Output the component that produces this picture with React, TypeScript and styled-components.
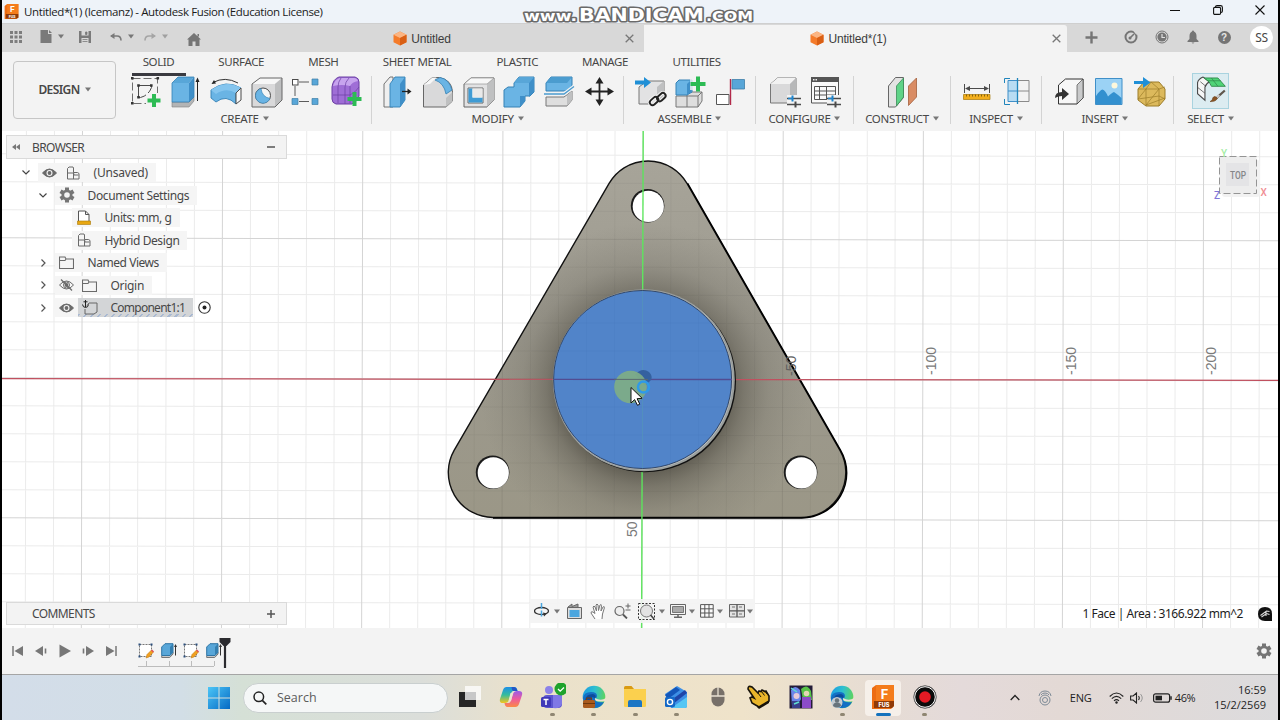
import React from 'react';
import styled, { createGlobalStyle } from 'styled-components';

const INK = '#4b4b4b';
const BLUE = '#6ab4e4';
const BLUE_DARK = '#3f8fc8';
const GREY = '#d9d9da';
const GREEN = '#2dbb54';

type SlotProps = { $w: number, $ml?: number };
type TextProps = { $size?: number, $ls?: number };

const GlobalStyle = createGlobalStyle`
  * { box-sizing: border-box; }
  body { margin: 0; background: #000; overflow: hidden; }
  svg { display: block; flex: none; }
`;

const Caret = ({ color = '#777' }: { color?: string }) => (
  <svg width="6" height="5" viewBox="0 0 6 5"><path d="M0 .5h6L3 4.5z" fill={color} /></svg>
);

const Plus = ({ x, y, s = 6.5 }: { x: number, y: number, s?: number }) => (
  <path d={`M${x - s} ${y}H${x + s}M${x} ${y - s}V${y + s}`} stroke={GREEN} strokeWidth="4" fill="none" />
);

const Sliders = () => (
  <g>
    <rect x="22" y="19" width="16" height="13" fill="#f3f3f3" />
    <path d="M22 22.5h14M22 28.5h14" stroke="#4b4b4b" strokeWidth="1.4" />
    <path d="M23 22.5h4" stroke="#1f85cc" strokeWidth="1.6" />
    <path d="M27.5 19.5v6" stroke="#1f85cc" strokeWidth="2" />
    <path d="M30.5 25.5v6" stroke="#4b4b4b" strokeWidth="2" />
  </g>
);

const ribbonIcons: { [key: string]: React.ReactNode } = {
  sketch: <>
    <path d="M7.5 2.5h25v25h-25z" fill="none" stroke={INK} strokeDasharray="8 3" strokeWidth=".8" />
    <path d="M13.5 9.5h13v2q-3 8-11 10h-2z" fill="none" stroke={INK} strokeWidth="1" />
    <path d="M6 1h2.6v2.6H6zM31.5 1h2.6v2.6h-2.6zM6 26h2.6v2.6H6zM12.2 8.2h2.6v2.6h-2.6zM25 8.2h2.6v2.6H25zM12.2 20h2.6v2.6h-2.6z" fill="#333" />
    <path d="M21 17h16v15H21z" fill="#f3f3f3" />
    <Plus x={29} y={24.5} />
  </>,
  extrude: <>
    <path d="M7 26h17l5-5v4l-5 6H7z" fill="#b3b4b5" stroke="#808080" strokeWidth=".6" />
    <path d="M7 7l6-6h16l-5 6z" fill="#58a6d8" />
    <path d="M7 7h17v19H7z" fill={BLUE} />
    <path d="M24 7l5-6v20l-5 5z" fill={BLUE_DARK} />
    <path d="M7 7l6-6h16v20l-5 5H7z" fill="none" stroke="#3481b5" strokeWidth=".8" />
    <path d="M32.5 5v20" stroke="#222" strokeWidth="1" />
    <path d="M30.5 6l2-4.5 2 4.5z" fill="#222" />
  </>,
  revolve: <>
    <path d="M8 6.5Q20 0 33 7" fill="none" stroke="#333" strokeWidth="1" />
    <path d="M6.5 8l2.5-4 2 3.5z" fill="#222" />
    <path d="M6 14Q21 3 36 12l-5 5v11Q21 18 11 26l-5-4z" fill={BLUE} stroke="#3481b5" strokeWidth=".9" />
    <path d="M6 14l5 4Q21 11 31 17l5-5Q21 3 6 14z" fill="#85c5ee" />
    <path d="M31 17l5-5v12l-5 4z" fill="#f7f7f7" stroke={INK} strokeWidth="1" />
  </>,
  hole: <>
    <path d="M7 8l8-6h22v22l-7 7H7z" fill={GREY} />
    <path d="M7 8l8-6h22l-7 6z" fill="#f7f7f7" />
    <path d="M30 8l7-6v22l-7 7z" fill="#bdbebf" />
    <path d="M7 8l8-6h22v22l-7 7H7z" fill="none" stroke="#666" strokeWidth="1" />
    <circle cx="18" cy="19.5" r="7.5" fill="#f5f5f5" stroke={INK} />
    <path d="M16 12.5Q17 21 25 22.5A7.5 7.5 0 1 1 16 12.5z" fill={BLUE} stroke="#3481b5" strokeWidth=".6" />
  </>,
  pattern: <>
    <path d="M14 6h12M10 10v12M14 25.5h12" stroke={INK} strokeDasharray="10 2" strokeWidth=".9" />
    <rect x="7.5" y="3.5" width="5.5" height="5.5" fill="#fff" stroke={INK} />
    <path d="M27 3h6v6h-6zM7 22.500h6v6H7zM27 22.5h6v6h-6z" fill="#58a6d8" stroke="#3f7fa8" strokeWidth=".7" />
  </>,
  form: <>
    <path d="M7 11Q8 3 14 1h16q4 1 4 5v14q-2 6-7 8H11q-4-1-4-5z" fill="#9f6ed6" stroke="#6b3fa3" strokeWidth="1" />
    <path d="M8 10Q10 3 15 2h14q3 0 4 3-6 1-8 5-8-2-17 0z" fill="#c7a4ee" />
    <path d="M16 2q-3 4-3 9M24 2q-4 4-4 9v17M8 19h17q6-3 9-8M25 10v17M13 11v16" stroke="#6b3fa3" strokeWidth=".7" fill="none" />
    <Plus x={29.5} y={23} s={7} />
  </>,
  pressPull: <>
    <path d="M6 8l6-7h3v30H6z" fill="#efefef" stroke="#666" strokeWidth=".9" />
    <path d="M12 8l5-7h10v23l-5 7H12z" fill={BLUE} stroke="#3481b5" strokeWidth=".9" />
    <path d="M22 8l5-7v23l-5 7z" fill={BLUE_DARK} />
    <path d="M24 15.5h7" stroke="#222" strokeWidth="1.3" /><path d="M29.5 12.5l4 3-4 3z" fill="#222" />
  </>,
  fillet: <>
    <path d="M5.5 9l9-7.500h7Q34 4 34.5 16v9L28 31H5.5z" fill={GREY} stroke="#666" />
    <path d="M28 22l6.500-6v9L28 31z" fill="#bfc0c1" />
    <path d="M5.5 9l9-7.500h4L12 8z" fill="#f7f7f7" />
    <path d="M17 4q9 3 11 14l6-4Q31 3 22 1.5z" fill={BLUE} stroke="#3481b5" strokeWidth=".8" />
  </>,
  shell: <>
    <path d="M6 8l7-6h23v22l-7 7H6z" fill="#e2e2e3" stroke="#666" />
    <path d="M29 8l7-6v22l-7 7z" fill="#bfc0c1" />
    <path d="M6 8l7-6h23l-7 6z" fill="#f7f7f7" stroke="#888" strokeWidth=".6" />
    <path d="M10 12h15v15H10z" fill="#fff" stroke="#666" />
    <path d="M10.5 12.5h4v9h10v5h-14z" fill="#3f9bd4" />
    <path d="M14.5 12.5h10v9h-10z" fill="#e9e9e9" />
  </>,
  combine: <>
    <path d="M6 14l4-3h6V7l5-6h15v15l-4 4h-5v5l-5 6H6z" fill={BLUE} stroke="#3481b5" strokeWidth="1" />
    <path d="M16 7l5-6h15l-5 6z" fill="#58a6d8" />
    <path d="M31 7l5-6v15l-5 5zM22 20h5v5l-5 6z" fill={BLUE_DARK} />
  </>,
  split: <>
    <path d="M8 7l5-6h21v9l-5 5H8z" fill={BLUE} stroke="#3481b5" />
    <path d="M8 7l5-6h21l-5 6z" fill="#4b9ccf" />
    <path d="M8 21h18l8-6v9l-5 6H8z" fill="#dedede" stroke="#777" />
    <path d="M29 19l5-4v9l-5 6z" fill="#bfc0c1" />
    <path d="M6 18h20l10-7.5" stroke="#f3f3f3" strokeWidth="3.5" fill="none" />
    <path d="M6 18h20l10-7.5" stroke="#4b9ccf" strokeWidth="1.3" fill="none" />
  </>,
  move: <>
    <path d="M21.500 5v21M11 15.5h21" stroke="#222" strokeWidth="1.8" />
    <path d="M17.5 7.5l4-6.500 4 6.500zM17.5 23.5l4 6.500 4-6.500zM13.5 11.500l-6.500 4 6.500 4zM29.5 11.500l6.500 4-6.500 4z" fill="#222" />
  </>,
  insertDerive: <>
    <path d="M9 11l8-6h17v16l-7 7H9z" fill="#e2e2e3" stroke="#777" />
    <path d="M27 11l7-6v16l-7 7z" fill="#bfc0c1" />
    <path d="M5 4.500h9V1l7 5.500-7 5.500V8.500H5z" fill="#1f8fd6" />
    <g fill="none" stroke="#f3f3f3" strokeWidth="4"><rect x="19" y="23" width="9.5" height="5.5" rx="2.7" transform="rotate(-42 23 25)" /><rect x="25.5" y="19" width="9.5" height="5.5" rx="2.7" transform="rotate(-42 30 20)" /></g>
    <g fill="none" stroke="#222" strokeWidth="1.9"><rect x="19" y="23" width="9.5" height="5.5" rx="2.7" transform="rotate(-42 23 25)" /><rect x="25.5" y="19" width="9.5" height="5.5" rx="2.7" transform="rotate(-42 30 20)" /></g>
  </>,
  newComponent: <>
    <path d="M6 20h11v-2l4-2h11v9l-4 6H6z" fill="#dedede" stroke="#777" />
    <path d="M17 20v11M17 20h11l4-4M28 20v11" stroke="#777" fill="none" />
    <path d="M6 7l3-3h13v12l-5 3H6z" fill={BLUE} stroke="#3481b5" />
    <path d="M17 8l4-4v12l-4 3z" fill={BLUE_DARK} />
    <path d="M20 0h16v14H20z" fill="#f3f3f3" opacity=".8" />
    <Plus x={28} y={8} s={7.5} />
  </>,
  joint: <>
    <path d="M6.5 18.5H19v10H6.5z" fill="#fff" stroke="#555" />
    <path d="M20.5 3v26" stroke="#b2294a" strokeWidth="1.4" />
    <path d="M22 3.500h12.500V13H22z" fill="#58a6d8" stroke="#3f7fa8" strokeWidth=".8" />
  </>,
  configure: <>
    <path d="M5.5 8l7-6H31v18l-6 7H5.5z" fill={GREY} stroke="#777" />
    <path d="M5.5 8l7-6H31l-6 6z" fill="#f2f2f2" />
    <path d="M25 8l6-6v18l-6 6z" fill="#b7b8b9" />
    <Sliders />
  </>,
  configTable: <>
    <path d="M6.5 1.500h27V27h-27z" fill="#fafafa" stroke="#555" />
    <path d="M6 1h28v5H6z" fill="#555" /><path d="M8 3h1.500v1.500H8zM10.500 3H12v1.500h-1.500z" fill="#eee" />
    <path d="M9.5 10.500h21v13h-21zM9.500 15h21M9.500 19h21M14.500 10.500v13M21.500 10.500v13" fill="none" stroke="#555" />
    <Sliders />
  </>,
  plane: <>
    <path d="M6.5 10l7-8.500h8v20l-8 9.500h-7z" fill="#e3e3e3" stroke="#666" />
    <path d="M14.5 10l7-8v19l-7 9z" fill="#5fd387" stroke="#3b8d58" strokeWidth=".8" />
    <path d="M26.5 10l8-8v19l-8 8.500z" fill="#d98c64" stroke="#a3603c" strokeWidth=".8" />
  </>,
  measure: <>
    <path d="M8.5 8v9M33.5 8v9M10 12.500h22" stroke={INK} />
    <path d="M9 12.500l5-2.500v5zM33 12.500l-5-2.500v5z" fill={INK} />
    <path d="M7.5 18.500H34v5H7.500z" fill="#f2ae1c" stroke="#a87808" strokeWidth=".7" />
    <path d="M10.5 18.500v2M13.5 18.500v2M16.5 18.500v2M19.5 18.500v2M22.5 18.500v2M25.5 18.500v2M28.5 18.500v2M31.5 18.500v2" stroke="#6b4d06" strokeWidth=".8" />
  </>,
  section: <>
    <path d="M12 4.500h9.500v21H12z" fill="#b8dcf3" stroke="#3f8fc8" /><path d="M12 15h9.500" stroke="#3f8fc8" />
    <path d="M21.5 4.500H33v21H21.500zM21.500 15H33" fill="#f3f3f3" stroke="#8a8a8a" />
    <path d="M21.5 2v26" stroke="#1f85bc" strokeWidth="1.3" />
    <path d="M14 2.500H8.500V7M8.500 23v5.500H14" fill="none" stroke="#1f85bc" />
  </>,
  insert: <>
    <path d="M10.5 9l7-6H35v19l-6 6H10.500z" fill="#f7f7f7" stroke="#333" />
    <path d="M29 9l6-6v19l-6 6z" fill="#c9cacb" stroke="#333" strokeWidth=".6" />
    <path d="M7 22q0-6 7-6v-4l7 6-7 6v-4q-4 0-7 2z" fill="#333" />
  </>,
  canvas: <>
    <path d="M7.5 2.500H34v26H7.500z" fill="#9bd2f5" stroke="#3f8fc8" />
    <circle cx="26.5" cy="9.5" r="3" fill="#fdf8dc" />
    <path d="M8 20q4-6 6.500-6.500 3 1 5.500 7 4-4 6-4.500 3 2 7.500 6v6H8z" fill="#3390cf" />
  </>,
  meshInsert: <>
    <path d="M10 13l6-7h15l6 7v10l-6 7H18l-8-6z" fill="#dcb95c" stroke="#9c7c28" />
    <path d="M10 13h21l6-2M10 23l8-10v17M18 29l13-16v17M18 29l19-7M31 13l-8-7-5 7M10 23l21-3 6 3" stroke="#9c7c28" strokeWidth=".7" fill="none" />
    <path d="M6 5h9V1l7.500 5.500L15 12V8H6z" fill="#1f8fd6" />
  </>,
  select: <>
    <path d="M6 14V8Q7 4 12 2l7 5q-4 2-5 6v14L6 20z" fill="#f6f6f6" stroke={INK} strokeWidth="1.200" />
    <path d="M6.5 13.500l7.500 6M9 7l6 5" stroke={INK} strokeWidth=".8" />
    <path d="M13 3h15l8 9H21q-1-5-8-9z" fill="#4fd477" stroke="#2f8a4a" />
    <path d="M17 6h14M21 3l7 9" stroke="#2f8a4a" strokeWidth=".8" />
    <path d="M35.5 16.500l-9 8" stroke="#5f564c" strokeWidth="2.4" />
    <path d="M29.5 21.500l-3 2.500" stroke="#c9c9c9" strokeWidth="2.6" />
    <path d="M27.5 25q-2 4-8 3.500 3-1 3-4 2-3 5 .5z" fill="#8a5424" stroke="#613914" strokeWidth=".6" />
  </>,
};

const groups = [
  { label: 'CREATE', width: 254, icons: ['sketch', 'extrude', 'revolve', 'hole', 'pattern', 'form'] },
  { label: 'MODIFY', width: 252, icons: ['pressPull', 'fillet', 'shell', 'combine', 'split', 'move'] },
  { label: 'ASSEMBLE', width: 132, icons: ['insertDerive', 'newComponent', 'joint'] },
  { label: 'CONFIGURE', width: 98, icons: ['configure', 'configTable'] },
  { label: 'CONSTRUCT', width: 97, icons: ['plane'] },
  { label: 'INSPECT', width: 91, icons: ['measure', 'section'] },
  { label: 'INSERT', width: 132, icons: ['insert', 'canvas', 'meshInsert'], pad: 5 },
  { label: 'SELECT', width: 73, icons: ['select'] },
];

const ribbonTabs = [
  { label: 'SOLID', width: 31 },
  { label: 'SURFACE', width: 48 },
  { label: 'MESH', width: 30 },
  { label: 'SHEET METAL', width: 71 },
  { label: 'PLASTIC', width: 43 },
  { label: 'MANAGE', width: 46 },
  { label: 'UTILITIES', width: 51 },
];

const Eye = ({ off }: { off?: boolean }) => (
  <svg width="15" height="12" viewBox="0 0 15 12">
    <path d="M.5 6Q7.5-2 14.5 6 7.5 14 .5 6z" fill={off ? 'none' : '#6a6a6a'} stroke="#6a6a6a" />
    <circle cx="7.5" cy="6" r="3" fill={off ? 'none' : '#f5f5f5'} stroke={off ? '#6a6a6a' : 'none'} />
    <circle cx="7.5" cy="6" r="1.9" fill="#6a6a6a" />
    {off && <path d="M2 .5l11 11" stroke="#6a6a6a" strokeWidth="1.2" />}
  </svg>
);

const Gear = () => (
  <svg width="16" height="16" viewBox="0 0 16 16">
    <path d="M8 .5v15M1.5 4.250l13 7.500M1.5 11.750l13-7.500" stroke="#757575" strokeWidth="4" />
    <circle cx="8" cy="8" r="5.5" fill="#757575" /><circle cx="8" cy="8" r="2.8" fill="#f3f3f3" />
  </svg>
);

const treeIcons: { [key: string]: React.ReactNode } = {
  assembly: <svg width="14" height="14" viewBox="0 0 14 14"><path d="M1.5 13V2.500l1.500-1.500h4l.5 1v4.500h4l1.500 1V13zM1.5 7h6v6M7.5 6.500L8 9h4.500" fill="none" stroke="#6a6a6a" /></svg>,
  gear: <Gear />,
  units: <svg width="14" height="15" viewBox="0 0 14 15"><path d="M1.5 11V1h7l3.500 3.500V11M8.5 1v3.500H12" fill="#fff" stroke="#555" /><path d="M.5 11h13v3.500H.5z" fill="#e8a712" stroke="#a87808" strokeWidth=".6" /></svg>,
  folder: <svg width="15" height="13" viewBox="0 0 15 13"><path d="M.5 12.500V1h5.500l1 2h7.500v9.500zM.5 4.500H6l1-1.500" fill="none" stroke="#6a6a6a" strokeWidth="1.1" /></svg>,
  component: <svg width="16" height="15" viewBox="0 0 16 15"><path d="M5 5.500l2-2.500h8v9l-3 2H3V9" fill="none" stroke="#666" /><path d="M3.5 0v7M.5 4.500Q1 7.500 3.500 7.500T6.500 4.500M1.5 1.800h4" stroke="#222" fill="none" /></svg>,
};

const treeRows = [
  { label: '(Unsaved)', icon: 'assembly', indent: 16, open: true, eye: 'on', ls: -.2 },
  { label: 'Document Settings', icon: 'gear', indent: 33, open: true, ls: -.35 },
  { label: 'Units: mm, g', icon: 'units', indent: 50, ls: -.4 },
  { label: 'Hybrid Design', icon: 'assembly', indent: 50, ls: -.4 },
  { label: 'Named Views', icon: 'folder', indent: 33, open: false, ls: -.45 },
  { label: 'Origin', icon: 'folder', indent: 33, open: false, eye: 'off', ls: -.3 },
  { label: 'Component1:1', icon: 'component', indent: 33, open: false, eye: 'on', ls: -.75, active: true },
];

const CubeLogo = () => (
  <svg width="14" height="15" viewBox="0 0 14 15">
    <path d="M7 .5l6.500 3.300v7.400L7 14.500.5 11.200V3.800z" fill="#f47b2a" />
    <path d="M7 .5l6.500 3.300L7 7 .5 3.800z" fill="#fbb583" /><path d="M7 7l6.500-3.200v7.400L7 14.500z" fill="#d95f14" />
  </svg>
);

const FusionLogo = ({ size }: { size: number }) => (
  <svg width={size} height={size} viewBox="0 0 22 24">
    <path d="M0 3l4-3h18v21l-3 3H0z" fill="#ed6c12" /><path d="M4 0h18v16H4z" fill="#f47c1c" />
    <path d="M2 16h20v5l-2 2H2z" fill="#8f3a08" />
    <text x="12.5" y="13.5" textAnchor="middle" fontFamily="Inter, sans-serif" fontWeight="700" fontSize="13" fill="#fff">F</text>
    <text x="12" y="22" textAnchor="middle" fontFamily="Inter, sans-serif" fontWeight="800" fontSize="5.5" fill="#fff">FUS</text>
  </svg>
);

const Watermark = () => (
  <svg width="236" height="22" viewBox="520 4 236 22">
    <g fontFamily="'DejaVu Sans', sans-serif" fontWeight="700" fill="#fff" stroke="#6a6a6a" strokeWidth="3" strokeLinejoin="round" paintOrder="stroke">
      <text x="524" y="21" fontSize="14" textLength="53" lengthAdjust="spacingAndGlyphs">www.</text>
      <text x="579" y="21" fontSize="17" textLength="125" lengthAdjust="spacingAndGlyphs">BANDICAM</text>
      <text x="706" y="21" fontSize="13.5" textLength="47" lengthAdjust="spacingAndGlyphs">.COM</text>
    </g>
  </svg>
);

const OUTLINE = 'M454.1 450.4L609.1 183.4A45 45 0 0 1 687 183.4L840 450.4A45 45 0 0 1 801 517.5H493A45 45 0 0 1 454.1 450.4z';
const HOLES = [[648, 206], [493, 472.5], [801, 472.5]];

const gridLines = (major: boolean) => {
  let d = '';
  for (let k = -25; k <= 25; k++) {
    if ((k % 5 === 0) === major) {
      d += `M${642.5 + 28.03 * k} 100V660`;
      if (Math.abs(k) < 11) {
        d += `M-20 ${379.3 + 28 * k}H1300`;
      }
    }
  }
  return d;
};

const Scene = () => (
  <SceneSvg viewBox="2 131 1276 497">
    <defs>
      <radialGradient id="shade" gradientUnits="userSpaceOnUse" cx="645" cy="388" r="165">
        <stop offset=".5" stopColor="#57544a" stopOpacity=".85" />
        <stop offset=".6" stopColor="#5f5c52" stopOpacity=".55" />
        <stop offset=".75" stopColor="#6b685e" stopOpacity=".25" />
        <stop offset="1" stopColor="#77746a" stopOpacity="0" />
      </radialGradient>
      <linearGradient id="plate" x1="0" y1="0" x2="0" y2="1">
        <stop offset="0" stopColor="#a7a499" /><stop offset=".5" stopColor="#9c998e" /><stop offset="1" stopColor="#9b9787" />
      </linearGradient>
      <clipPath id="outline"><path d={OUTLINE} /></clipPath>
    </defs>
    <rect x="0" y="130" width="1280" height="500" fill="#fff" />
    <g transform="rotate(.13 642 379)" fill="none">
      <path d={gridLines(false)} stroke="#ebebeb" />
      <path d={gridLines(true)} stroke="#d4d4d4" />
    </g>
    <path d={OUTLINE} fill="url(#plate)" />
    <path d={OUTLINE} fill="url(#shade)" />
    <g clipPath="url(#outline)" transform="rotate(.13 642 379)" fill="none">
      <path d={gridLines(false)} stroke="#000" strokeOpacity=".04" />
      <path d={gridLines(true)} stroke="#000" strokeOpacity=".08" />
    </g>
    <path d={OUTLINE} fill="none" stroke="#111" strokeWidth="1.4" />
    <path d="M687.6 183.400L840.600 450.400A45 45 0 0 1 801 518H493" fill="none" stroke="#000" strokeWidth="1.5" />
    {HOLES.map(([x, y]) => (
      <g key={x}>
        <circle cx={x - .4} cy={y - .3} r="16.8" fill="#1b1b1b" />
        <circle cx={x + .3} cy={y + .4} r="15.6" fill="#fff" />
      </g>
    ))}
    <path d="M2 378.6L1278 380.3" stroke="#c0505f" strokeWidth="1.2" />
    <path d="M643.2 131L641.600 628" stroke="#5fe65f" strokeWidth="1.4" />
    <circle cx="645" cy="381.3" r="91" fill="#111" />
    <circle cx="643.8" cy="380.3" r="91" fill="#9b9f9d" />
    <circle cx="643" cy="379.8" r="89.7" fill="#b9bfc1" />
    <circle cx="642.6" cy="379.5" r="89" fill="#5184c9" stroke="#1d3050" strokeWidth=".8" />
    <path d="M586.5 312v135M614.5 296v165M670.500 296v165M698.5 310v137M560 351h164M560 407h164M572 323h140M572 435h140" stroke="#3c6db0" strokeOpacity=".1" />
    <path d="M554 379.300L732 379.500" stroke="#524c92" strokeWidth="1.3" />
    <path d="M642.5 291V468" stroke="#5497b8" strokeWidth="1" opacity=".6" />
    <path d="M635 374.500Q642 367 649 372q4 4 2 8l-6 6z" fill="#35619f" />
    <circle cx="630.5" cy="387" r="16.3" fill="#7fae86" opacity=".92" />
    <path d="M614 379.400H648" stroke="#5b6a70" />
    <circle cx="643.5" cy="387" r="5.500" fill="none" stroke="#2f9ae8" strokeWidth="2.500" />
    <path d="M631 387.500v15.500l3.600-3.400 2.900 5.700 2.300-1.100-2.700-5.500 5-.4z" fill="#fff" stroke="#111" strokeWidth="1" />
    <g fontFamily="'Liberation Sans', sans-serif" fontSize="14" fill="#7a7a7a">
      <text transform="translate(637 537) rotate(-90)">50</text>
      <text transform="translate(795.500 376) rotate(-90)" fill="#606060">-50</text>
      <text transform="translate(935.500 375) rotate(-90)">-100</text>
      <text transform="translate(1075.500 375) rotate(-90)">-150</text>
      <text transform="translate(1215.500 375) rotate(-90)">-200</text>
    </g>
    <rect x="1222" y="160" width="38" height="37" rx="3" fill="#f2f2f2" />
    <rect x="1219.5" y="156.500" width="37" height="37" fill="#ededed" stroke="#949494" strokeDasharray="7 3" />
    <rect x="1226" y="163" width="23" height="23" fill="#e4e4e6" />
    <text x="1230" y="179" fontFamily="Roboto, sans-serif" fontWeight="500" fontSize="10.5" fill="#858688" textLength="16" lengthAdjust="spacingAndGlyphs">TOP</text>
    <g fontFamily="Roboto, sans-serif" fontSize="10" fontWeight="500">
      <text x="1221" y="157" fill="#a4eda4">Y</text><text x="1260.500" y="196" fill="#f08d93">X</text><text x="1214" y="199" fill="#8176d8">Z</text>
    </g>
  </SceneSvg>
);

const navTools: { ml: number, node: React.ReactNode }[] = [
  { ml: 4, node: <svg width="16" height="18" viewBox="0 0 16 18"><ellipse cx="7.5" cy="9" rx="7" ry="3.5" fill="none" stroke="#333" strokeWidth="1.3" /><path d="M7.5 1v15" stroke="#4ba6df" strokeWidth="1.5" strokeDasharray="6 1.5" /><path d="M9 10.500l4 1-3 3z" fill="#333" /></svg> },
  { ml: 4, node: <Caret /> },
  { ml: 7, node: <svg width="15" height="16" viewBox="0 0 15 16"><path d="M.5 4.500h14v11H.5z" fill="#ddd" stroke="#666" /><path d="M1 4l4-3v2.500l6-2.500v3" fill="#999" stroke="#666" /><path d="M2.5 7h10v7h-10z" fill="#4ba6df" /></svg> },
  { ml: 8, node: <svg width="16" height="17" viewBox="0 0 16 17"><path d="M5 16L1 10q0-2 2-1l2 1.500L3 4q1-2 2 0l1.500 4L6 2q1-2 2 0l.5 5.500L10 2q1.500-1 1.500.5L11 8l2-4q1.500-1 1.500.5L12.500 11 12 16" fill="#fff" stroke="#777" /></svg> },
  { ml: 8, node: <svg width="17" height="16" viewBox="0 0 17 16"><circle cx="5.5" cy="8" r="4.5" fill="#eee" stroke="#666" strokeWidth="1.2" /><path d="M9 11.500l4 4" stroke="#555" strokeWidth="1.8" /><path d="M11.500 3h5M14 .5v5M11.500 7h5" stroke="#666" /></svg> },
  { ml: 7, node: <svg width="17" height="17" viewBox="0 0 17 17"><path d="M.5.5h16v16H.5z" fill="none" stroke="#333" strokeDasharray="2 1.5" /><circle cx="8.5" cy="8" r="6" fill="#e3e3e3" stroke="#777" /><path d="M12.5 12l3.500 4" stroke="#444" strokeWidth="1.7" /></svg> },
  { ml: 4, node: <Caret /> },
  { ml: 5, node: <svg width="16" height="14" viewBox="0 0 16 14"><path d="M.5.5h15v10H.5z" fill="#f6f6f6" stroke="#666" /><path d="M2.5 2.500h11v6h-11z" fill="#aaa" stroke="#777" /><path d="M4 13.200h8M8 10.500v3" stroke="#666" strokeWidth="1.5" /></svg> },
  { ml: 3, node: <Caret /> },
  { ml: 5, node: <svg width="14" height="14" viewBox="0 0 14 14"><path d="M.6.6h12.600v12.600H.6zM.6 4.800h12.600M.6 9h12.600M4.800.6v12.600M9 .6v12.600" fill="#fafafa" stroke="#555" /></svg> },
  { ml: 3, node: <Caret /> },
  { ml: 6, node: <svg width="16" height="14" viewBox="0 0 16 14"><path d="M.5.5h15v12.500H.5z" fill="#e3e3e3" stroke="#666" /><path d="M8 .5V13M.5 6.800h15" stroke="#555" strokeWidth="1.3" /><path d="M3 3h3M10 3h3M3 10h3M10 10h3" stroke="#aaa" strokeWidth="2" /></svg> },
  { ml: 2, node: <Caret /> },
];

const SketchFeature = () => (
  <svg width="16" height="16" viewBox="0 0 16 16"><path d="M1.5 1.500h12v12h-12z" fill="#fff" stroke="#777" strokeDasharray="2 1" /><path d="M.5.5h2v2h-2zM12.500.5h2v2h-2zM.5 12.500h2v2h-2z" fill="#2c4f7c" /><path d="M8 15l1-3.500 4.500-4.500 2 2-4.500 5z" fill="#f2a01f" stroke="#b97412" strokeWidth=".5" /><path d="M13.500 7l2 2" stroke="#e0525e" strokeWidth="1.5" /></svg>
);

const ExtrudeFeature = () => (
  <svg width="16" height="16" viewBox="0 0 16 16"><path d="M.7 12.500v2h8l3.300-3.500V9" fill="#c8c8c8" stroke="#777" /><path d="M.7 4L4 .7h8v8.500L9 12.500H.7z" fill="#58a6d8" stroke="#2f76a6" /><path d="M9 4l3-3.300v8.500L9 12.500z" fill="#347fb0" /><path d="M14.500 2v10.500" stroke="#333" /><path d="M13 4l1.500-3L16 4z" fill="#333" /></svg>
);

const EdgeLogo = ({ badge }: { badge: 'work' | 'user' }) => (
  <svg width="24" height="24" viewBox="0 0 24 24">
    <defs>
      <linearGradient id={`edge-${badge}`} x1="0" y1=".3" x2="1" y2=".5"><stop offset="0" stopColor="#1b9de2" /><stop offset=".5" stopColor="#2fc0cf" /><stop offset="1" stopColor="#5ed45c" /></linearGradient>
    </defs>
    <circle cx="12" cy="12" r="11.3" fill={`url(#edge-${badge})`} />
    <path d="M.8 13Q2 7 9 7q6 0 6 4 0 2-2 3 0 4 9 3-3 6-10 6Q2 23 .8 13z" fill="#1470c4" />
    <path d="M10 12q-2 5 3 9-8 1-10-6 1-6 8-6 4 1 2 4z" fill="#0c4c9c" />
    <path d="M13 13q-1 5 11 3v-3q-4 3-9 1z" fill="#ede1d0" />
    {badge === 'work'
      ? <g><rect x="1" y="15" width="12" height="8" rx="1.5" fill="#a95b1e" /><path d="M4.500 15v-2h5v2" stroke="#7c3d0d" fill="none" /><path d="M1 18.500h12" stroke="#6f380d" /></g>
      : <g><circle cx="7" cy="17.5" r="5.5" fill="#c4ccd2" /><circle cx="7" cy="15.5" r="2.2" fill="#68747c" /><path d="M3 21q0-3.500 4-3.500t4 3.500q-4 3-8 0z" fill="#68747c" /></g>}
  </svg>
);

const taskbarApps: { name: string, running?: boolean, active?: boolean, node: React.ReactNode }[] = [
  { name: 'taskview', node: <svg width="24" height="24" viewBox="0 0 24 24"><path d="M1 7h17v15H1z" fill="#262626" /><path d="M7 1h16v14H7z" fill="#fff" opacity=".75" /></svg> },
  { name: 'copilot', node: <svg width="24" height="24" viewBox="0 0 24 24">
    <defs>
      <linearGradient id="cp1" x1="0" y1="0" x2="0" y2="1"><stop offset="0" stopColor="#1d8fe8" /><stop offset=".5" stopColor="#35bd9c" /><stop offset="1" stopColor="#f6c41c" /></linearGradient>
      <linearGradient id="cp2" x1="0" y1="0" x2="0" y2="1"><stop offset="0" stopColor="#9a5ce8" /><stop offset=".5" stopColor="#ee5a9c" /><stop offset="1" stopColor="#fb8a45" /></linearGradient>
    </defs>
    <path d="M7.500 2h8q2.500 0 3 4h-4q-2 0-3 4l-1.500 5q-1 3-4 3H4Q0 18 1 14L4 5q1-3 3.500-3z" fill="url(#cp1)" />
    <path d="M16.500 22h-8q-2.500 0-3-4h4q2 0 3-4L14 9q1-3 4-3h2q4 0 3 4l-3 9q-1 3-3.500 3z" fill="url(#cp2)" />
    <path d="M14.500 2q3 0 4 4h-4q-2-1-2-4z" fill="#2456c6" />
    <path d="M11.500 8h2.500l-2 8h-2.500z" fill="#ece2d0" />
  </svg> },
  { name: 'teams', running: true, node: <svg width="28" height="28" viewBox="0 0 28 28">
    <circle cx="11" cy="7" r="4" fill="#8c82e8" /><rect x="5" y="12" width="19" height="13" rx="4" fill="#5c55cf" /><path d="M15 12h9v9q-2 5-9 4z" fill="#8078e6" />
    <rect x="3" y="14" width="10" height="10" rx="1.5" fill="#4038b8" /><path d="M5.500 16.500h5M8 16.500v5.500" stroke="#fff" strokeWidth="1.5" />
    <circle cx="23" cy="6" r="6.5" fill="#1fa32c" /><path d="M20 6l2.200 2.200L26 4.500" stroke="#fff" strokeWidth="1.3" fill="none" />
  </svg> },
  { name: 'edge', running: true, node: <EdgeLogo badge="work" /> },
  { name: 'files', running: true, node: <svg width="24" height="24" viewBox="0 0 24 24"><path d="M1 2.500q0-1.500 1.500-1.500h6l2.500 3H1z" fill="#d99a12" /><path d="M1 4h22v17q0 1-1.500 1h-19Q1 22 1 21z" fill="#fbd04e" /><path d="M5 22v-5q0-2 2-2h10q2 0 2 2v5z" fill="#1c76c4" /></svg> },
  { name: 'outlook', running: true, node: <svg width="24" height="24" viewBox="0 0 24 24"><path d="M1 9L13 1l10 6v14q0 2-2 2H7z" fill="#3d8fe6" /><path d="M1 10L12 2l4 3L4 14z" fill="#1457ba" /><path d="M6 16L21 5l2 3-14 11z" fill="#1e45a8" /><path d="M10 21l13-9v9q0 2-2 2H9z" fill="#55c6f4" /><rect x="1" y="12" width="10" height="10" rx="1.5" fill="#1468c6" /><circle cx="6" cy="17" r="2.6" fill="none" stroke="#fff" strokeWidth="1.4" /></svg> },
  { name: 'mouse', node: <svg width="14" height="20" viewBox="0 0 14 20"><rect x=".5" y=".5" width="13" height="19" rx="6.5" fill="#777069" /><path d="M7 0v9M0 9h14" stroke="#e9e0d2" strokeWidth="1.3" /></svg> },
  { name: 'pointer', node: <svg width="24" height="24" viewBox="0 0 24 24"><path d="M10 22l12-6v2l-10 6z" fill="#17130a" /><path d="M1 4q0-4 4-2l6 6 1-2 2 .5 1-1.500 3 1.500 1-.5L22 11v5l-10 6-7-4-2-5 2-1 2 1z" fill="#e9b52a" stroke="#17130a" strokeWidth="1.6" /><path d="M11 8l3 4M14.500 6.500l3 4M18 6l2 3" stroke="#17130a" /></svg> },
  { name: 'game', node: <svg width="24" height="24" viewBox="0 0 24 24"><path d="M.5.5h23v23H.5z" fill="#241c38" /><path d="M2 5q4-6 9 0l1 9-4 7H3z" fill="#6a86ea" /><path d="M12 4q6-6 10 2l1 9h-9z" fill="#58c24a" /><circle cx="7.5" cy="11" r="3" fill="#e8cbd8" /><circle cx="17.5" cy="8.500" r="2.8" fill="#e3d6b4" /><path d="M13 12h9v11h-9z" fill="#8c4bc8" /><path d="M3 16h8v7H3z" fill="#3a3f8c" /><path d="M5 19l5-2M2 3l6 4" stroke="#5fe0d0" strokeWidth="1.5" /></svg> },
  { name: 'edge-personal', running: true, node: <EdgeLogo badge="user" /> },
  { name: 'fusion', running: true, active: true, node: <FusionLogo size={24} /> },
  { name: 'recorder', running: true, node: <svg width="24" height="24" viewBox="0 0 24 24"><circle cx="12" cy="12" r="11.2" fill="#0b0b0b" stroke="#555" strokeWidth=".8" /><circle cx="12" cy="12" r="10.3" fill="none" stroke="#fff" strokeWidth="1" /><circle cx="12" cy="12" r="5.8" fill="#e51a24" /></svg> },
];

const CloseIcon = () => (
  <svg width="9" height="9" viewBox="0 0 9 9"><path d="M.7.7l7.600 7.600M8.300.7L.7 8.300" stroke="#777" strokeWidth="1.3" /></svg>
);

const App = () => (
  <Window>
    <GlobalStyle />
    <TitleBar>
      <FusionLogo size={15} />
      <TitleText>Untitled*(1) (Icemanz) - Autodesk Fusion (Education License)</TitleText>
      <WatermarkBox><Watermark /></WatermarkBox>
      <WindowButtons>
        <svg width="10" height="10" viewBox="0 0 10 10"><path d="M0 5.500h10" stroke="#111" /></svg>
        <svg width="10" height="10" viewBox="0 0 10 10"><rect x=".6" y="2.4" width="7" height="7" rx="1.2" fill="none" stroke="#111" strokeWidth="1.1" /><path d="M2.600 2V1.800Q2.600.6 4 .6h3.500Q9.400.6 9.400 2.500V6Q9.400 7.400 8 7.400" fill="none" stroke="#111" strokeWidth="1.1" /></svg>
        <svg width="10" height="10" viewBox="0 0 10 10"><path d="M.5.5l9 9M9.500.5l-9 9" stroke="#111" strokeWidth="1.1" /></svg>
      </WindowButtons>
    </TitleBar>

    <DocumentBar>
      <QuickAccess>
        <Slot $w={28}><svg width="12" height="12" viewBox="0 0 12 12"><path d="M0 0h3v3H0zM4.500 0h3v3h-3zM9 0h3v3H9zM0 4.500h3v3H0zM4.500 4.500h3v3h-3zM9 4.500h3v3H9zM0 9h3v3H0zM4.500 9h3v3h-3zM9 9h3v3H9z" fill="#7d7d7d" /></svg></Slot>
        <Slot $w={20} $ml={6}><svg width="12" height="13" viewBox="0 0 12 13"><path d="M.5 0H8v4h3.500v9H.5z" fill="#7a7a7a" /><path d="M9 0l3 3H9z" fill="#7a7a7a" /></svg></Slot>
        <Slot $w={7} $ml={1}><Caret /></Slot>
        <Slot $w={24} $ml={9}><svg width="12" height="12" viewBox="0 0 12 12"><path d="M0 0h12v12H0z" fill="#7a7a7a" /><path d="M2.500 0h7v4.500h-7zM2.500 7h7v5h-7z" fill="#d8d8d8" /><path d="M6.500 1H8v2.500H6.500zM3.500 8.500h5M3.500 10.500h5" fill="#7a7a7a" stroke="#7a7a7a" strokeWidth=".8" /></svg></Slot>
        <Slot $w={20} $ml={9}><svg width="12" height="8" viewBox="0 0 12 8"><path d="M1 3h6q4 0 4 4.500" fill="none" stroke="#7a7a7a" strokeWidth="1.6" /><path d="M4.500 0v6L0 3z" fill="#7a7a7a" /></svg></Slot>
        <Slot $w={8} $ml={1}><Caret /></Slot>
        <Slot $w={20} $ml={5}><svg width="12" height="8" viewBox="0 0 12 8"><path d="M11 3H5Q1 3 1 7.500" fill="none" stroke="#a5a5a5" strokeWidth="1.6" /><path d="M7.500 0v6L12 3z" fill="#a5a5a5" /></svg></Slot>
        <Slot $w={8} $ml={1}><Caret color="#a0a0a0" /></Slot>
        <HomeSlot><svg width="14" height="13" viewBox="0 0 14 13"><path d="M7 0l7 6.500h-1.500V13h-4V8.500h-3V13h-4V6.500H0zM10.500 1H12v2.500h-1.500z" fill="#757575" /></svg></HomeSlot>
      </QuickAccess>
      <DocTab>
        <TabTitle><CubeLogo />Untitled</TabTitle>
        <CloseIcon />
      </DocTab>
      <DocTab $active>
        <TabTitle><CubeLogo />Untitled*(1)</TabTitle>
        <CloseIcon />
      </DocTab>
      <Account>
        <Slot $w={14} $ml={17}><svg width="13" height="13" viewBox="0 0 13 13"><path d="M6.500 .5v12M.5 6.500h12" stroke="#757575" strokeWidth="2.4" /></svg></Slot>
        <Slot $w={14} $ml={26}><svg width="14" height="14" viewBox="0 0 14 14"><circle cx="7" cy="7" r="5.5" fill="none" stroke="#757575" strokeWidth="2" /><path d="M9 .5l4.500.5-1 4z" fill="#d8d8d8" /><path d="M6.500 7.500L10 4" stroke="#757575" strokeWidth="1.6" /><circle cx="6" cy="8" r="1.5" fill="#757575" /></svg></Slot>
        <Slot $w={14} $ml={17}><svg width="14" height="14" viewBox="0 0 14 14"><circle cx="7" cy="7" r="6" fill="none" stroke="#757575" strokeWidth="1" /><circle cx="7" cy="7" r="4.6" fill="#757575" /><path d="M7 4v3.500h3" stroke="#e0e0e0" strokeWidth="1.2" fill="none" /></svg></Slot>
        <Slot $w={14} $ml={17}><svg width="12" height="14" viewBox="0 0 12 14"><path d="M6 .5q1 0 1 1Q9.500 2.500 9.500 6v3l2 2v1H.5v-1l2-2V6Q2.500 2.500 5 1.500q0-1 1-1zM4.500 12.500h3q-1.500 2-3 0z" fill="#757575" /></svg></Slot>
        <Slot $w={14} $ml={17}><HelpDot>?</HelpDot></Slot>
        <Avatar>SS</Avatar>
      </Account>
    </DocumentBar>

    <Ribbon>
      <DesignColumn>
        <DesignButton>DESIGN <Caret /></DesignButton>
      </DesignColumn>
      <RibbonBody>
        <TabRow>
          {ribbonTabs.map((tab, index) => (
            <RibbonTab key={tab.label} $w={tab.width} $active={index === 0}>{tab.label}</RibbonTab>
          ))}
        </TabRow>
        <GroupRow>
          {groups.map(group => (
            <Group key={group.label} $w={group.width}>
              <IconRow>
                {group.icons.map(name => (
                  <RibbonIcon key={name} viewBox="0 0 40 32" $selected={name === 'select'}>{ribbonIcons[name]}</RibbonIcon>
                ))}
              </IconRow>
              <GroupLabel $pad={group.pad}>{group.label} <Caret /></GroupLabel>
            </Group>
          ))}
        </GroupRow>
      </RibbonBody>
    </Ribbon>

    <Viewport>
      <Scene />
      <Overlay>
        <PanelHeader $wide>
          <svg width="8" height="6" viewBox="0 0 8 6"><path d="M4 0v6L0 3zM8 0v6L4 3z" fill="#777" /></svg>
          <PanelTitle $ml={12}>BROWSER</PanelTitle>
          <svg width="8" height="2" viewBox="0 0 8 2"><path d="M0 1h8" stroke="#555" strokeWidth="1.5" /></svg>
        </PanelHeader>
        <Tree>
          {treeRows.map(row => (
            <TreeRow key={row.label} $indent={row.indent}>
              <Slot $w={16}>
                {row.open !== undefined && (row.open
                  ? <svg width="8" height="5" viewBox="0 0 8 5"><path d="M.5.5L4 4 7.500.5" stroke="#444" fill="none" strokeWidth="1.2" /></svg>
                  : <svg width="5" height="8" viewBox="0 0 5 8"><path d="M.5.5L4 4 .5 7.500" stroke="#555" fill="none" strokeWidth="1.2" /></svg>)}
              </Slot>
              <RowBody>
                {row.eye && <Slot $w={23}><Eye off={row.eye === 'off'} /></Slot>}
                <RowLabel $active={row.active} $ls={row.ls}>
                  <Slot $w={23}>{treeIcons[row.icon]}</Slot>
                  <span>{row.label}</span>
                </RowLabel>
              </RowBody>
              {row.active && <Slot $w={22}><svg width="13" height="13" viewBox="0 0 13 13"><circle cx="6.5" cy="6.5" r="5.7" fill="#fff" stroke="#333" strokeWidth="1.1" /><circle cx="6.5" cy="6.5" r="2" fill="#222" /></svg></Slot>}
            </TreeRow>
          ))}
        </Tree>
        <BottomRow>
          <PanelHeader>
            <PanelTitle $ml={20}>COMMENTS</PanelTitle>
            <svg width="8" height="8" viewBox="0 0 8 8"><path d="M0 4h8M4 0v8" stroke="#555" strokeWidth="1.5" /></svg>
          </PanelHeader>
          <NavBar>
            {navTools.map((tool, index) => <NavItem key={index} $ml={tool.ml}>{tool.node}</NavItem>)}
          </NavBar>
          <Status>
            1 Face | Area : 3166.922 mm^2
            <svg width="14" height="14" viewBox="0 0 14 14"><path d="M7 0q7 0 7 7v7H7Q0 14 0 7t7-7z" fill="#111" /><path d="M2.500 8.500l6-4.500 3 .5M3.500 10l5-3.500 3 1M8 4v5" stroke="#ddd" strokeWidth="1.1" fill="none" /></svg>
          </Status>
        </BottomRow>
      </Overlay>
    </Viewport>

    <Timeline>
      <Playback>
        <svg width="12" height="12" viewBox="0 0 12 12"><path d="M1 1v10" stroke="#777" strokeWidth="1.5" /><path d="M11 1v10L2.500 6z" fill="#777" /></svg>
        <svg width="12" height="12" viewBox="0 0 12 12"><path d="M8 1v10L0 6z" fill="#777" /><path d="M10.500 3.500v5" stroke="#777" strokeWidth="1.6" /></svg>
        <svg width="12" height="14" viewBox="0 0 12 14"><path d="M.5.5v13L12 7z" fill="#777" /></svg>
        <svg width="12" height="12" viewBox="0 0 12 12"><path d="M4 1v10l8-5z" fill="#777" /><path d="M1.500 3.500v5" stroke="#777" strokeWidth="1.6" /></svg>
        <svg width="12" height="12" viewBox="0 0 12 12"><path d="M1 1v10l8.500-5z" fill="#777" /><path d="M11 1v10" stroke="#777" strokeWidth="1.5" /></svg>
      </Playback>
      <History>
        <Feature><SketchFeature /></Feature>
        <Feature><ExtrudeFeature /></Feature>
        <Feature><SketchFeature /></Feature>
        <Feature><ExtrudeFeature /></Feature>
      </History>
      <Marker viewBox="0 0 12 30"><path d="M.5 0h11v4L7.500 8h-3L.5 4z" fill="#2b2b2f" /><path d="M6 6v24" stroke="#2b2b2f" strokeWidth="2.2" /></Marker>
      <TimelineEnd><Gear /></TimelineEnd>
    </Timeline>

    <Taskbar>
      <svg width="22" height="22" viewBox="0 0 22 22">
        <defs><linearGradient id="win" x1="0" y1="0" x2="1" y2="1"><stop offset="0" stopColor="#4cc6f7" /><stop offset="1" stopColor="#0469c4" /></linearGradient></defs>
        <path d="M0 0h10.500v10.500H0zM11.500 0H22v10.500H11.500zM0 11.500h10.500V22H0zM11.500 11.500H22V22H11.500z" fill="url(#win)" />
      </svg>
      <SearchBox>
        <svg width="14" height="14" viewBox="0 0 14 14"><circle cx="5.8" cy="5.8" r="4.8" fill="none" stroke="#222" strokeWidth="1.5" /><path d="M9.300 9.300l4 4" stroke="#222" strokeWidth="1.7" /></svg>
        Search
      </SearchBox>
      <Apps>
        {taskbarApps.map(app => (
          <AppButton key={app.name} $active={app.active}>
            <AppIcon>{app.node}</AppIcon>
            {app.running && <Indicator $active={app.active} />}
          </AppButton>
        ))}
      </Apps>
      <Tray>
        <Slot $w={12}><svg width="10" height="7" viewBox="0 0 10 7"><path d="M.7 6L5 1.500 9.300 6" stroke="#222" strokeWidth="1.3" fill="none" /></svg></Slot>
        <Slot $w={14} $ml={17}><svg width="14" height="16" viewBox="0 0 14 16"><g fill="none" stroke="#7d8a96"><circle cx="7" cy="10" r="5" /><circle cx="7" cy="10" r="2.5" /><path d="M1 6Q2 1 7 1t6 5M3 5q1-2 4-2t4 2" /></g></svg></Slot>
        <TrayText $size={11} $ls={-.2}>ENG</TrayText>
        <Slot $w={16} $ml={17}><svg width="15" height="12" viewBox="0 0 15 12"><g fill="none" stroke="#222" strokeWidth="1.1"><path d="M.7 4.500Q7.500-2.500 14.300 4.500M2.800 6.700Q7.500 2 12.200 6.700M5 8.800Q7.500 6.500 10 8.800" /></g><circle cx="7.5" cy="10.5" r="1.2" fill="#222" /></svg></Slot>
        <Slot $w={16} $ml={4}><svg width="14" height="12" viewBox="0 0 14 12"><path d="M.6 4h2.500L6.500 1v10L3.100 8H.6zM8.500 4q1.500 2 0 4" fill="none" stroke="#222" strokeWidth="1.1" /><path d="M10.500 2q3.500 4 0 8" fill="none" stroke="#999" /></svg></Slot>
        <Slot $w={20} $ml={8}><svg width="19" height="10" viewBox="0 0 19 10"><rect x=".6" y=".8" width="16" height="8.4" rx="2" fill="none" stroke="#222" strokeWidth="1.2" /><path d="M2.500 2.700h6.500v4.600H2.500z" fill="#222" /><path d="M18 3.200v3.600" stroke="#222" strokeWidth="1.5" /></svg></Slot>
        <Percent>46%</Percent>
        <Clock><span>16:59</span><span>15/2/2569</span></Clock>
      </Tray>
    </Taskbar>
  </Window>
);

const Window = styled.div`
  width: 1280px;
  height: 720px;
  border: solid #000;
  border-width: 0 2px;
  background: #f3f3f3;
  display: flex;
  flex-direction: column;
  font-family: 'Noto Sans', sans-serif;
  color: #474747;
  overflow: hidden;
  white-space: nowrap;
`;

const Slot = styled.div<SlotProps>`
  width: ${p => p.$w}px;
  margin-left: ${p => p.$ml || 0}px;
  flex: none;
  display: flex;
  align-items: center;
  justify-content: center;
`;

const TitleBar = styled.div`
  height: 23px;
  flex: none;
  background: #eef3f9;
  display: flex;
  align-items: center;
  padding: 0 13px 1px 2px;
  position: relative;
`;

const TitleText = styled.div`
  font: 11.5px 'Open Sans', sans-serif;
  letter-spacing: -.38px;
  color: #1b1b1b;
  margin-left: 5px;
  flex: 1;
`;

const WatermarkBox = styled.div`
  position: absolute;
  left: 518px;
  top: 4px;
  z-index: 1;
`;

const WindowButtons = styled.div`
  display: flex;
  gap: 32.5px;
  padding-bottom: 3px;
`;

const DocumentBar = styled.div`
  height: 29px;
  flex: none;
  background: #d8d8d8;
  border-top: 1px solid #cfcfcf;
  display: flex;
`;

const QuickAccess = styled.div`
  width: 216px;
  display: flex;
  align-items: center;
  padding-bottom: 3px;
`;

const HomeSlot = styled(Slot).attrs({ $w: 20, $ml: 15 })`
  padding-top: 5px;
`;

const DocTab = styled.div<{ $active?: boolean }>`
  width: ${p => p.$active ? 423 : 426}px;
  margin-top: 1px;
  border-radius: ${p => p.$active ? '0 3px 0 0' : '0'};
  background: ${p => p.$active ? '#f3f3f3' : '#d8d8d8'};
  display: flex;
  align-items: center;
  padding-right: ${p => p.$active ? 6 : 10}px;
  justify-content: space-between;
`;

const TabTitle = styled.div`
  flex: 1;
  display: flex;
  align-items: center;
  justify-content: center;
  gap: 4px;
  font: 12px 'Liberation Sans', sans-serif;
  letter-spacing: -.15px;
  padding-left: 1px;
  color: #3c3c3c;
`;

const Account = styled.div`
  flex: 1;
  display: flex;
  align-items: center;
  padding-bottom: 2px;
`;

const HelpDot = styled.div`
  width: 13px;
  height: 13px;
  border-radius: 50%;
  background: #757575;
  color: #e6e6e6;
  font: bold 10px/13px 'Liberation Sans', sans-serif;
  text-align: center;
`;

const Avatar = styled.div`
  width: 23px;
  height: 23px;
  margin-left: 19px;
  border-radius: 50%;
  background: #fff;
  font-size: 12px;
  letter-spacing: -.4px;
  line-height: 23px;
  text-align: center;
`;

const Ribbon = styled.div`
  height: 79px;
  flex: none;
  display: flex;
  background: #f3f3f3;
`;

const DesignColumn = styled.div`
  width: 116px;
  padding: 9px 2px 0 11px;
`;

const DesignButton = styled.div`
  height: 58px;
  border: 1px solid #c6c6c6;
  border-radius: 4px;
  display: flex;
  align-items: center;
  justify-content: center;
  gap: 5px;
  padding-bottom: 2px;
  font-size: 12px;
  font-weight: 600;
  letter-spacing: -.6px;
`;

const RibbonBody = styled.div`
  flex: 1;
`;

const TabRow = styled.div`
  height: 23px;
  display: flex;
  gap: 43.2px;
  padding-left: 25px;
`;

const RibbonTab = styled.div<{ $w: number, $active: boolean }>`
  width: ${p => p.$w}px;
  display: flex;
  flex-direction: column;
  align-items: center;
  font-size: 11.5px;
  letter-spacing: -.38px;
  line-height: 20px;
  &::after {
    content: '';
    flex: none;
    width: 54px;
    height: 2.5px;
    margin-top: 1px;
    background: ${p => p.$active ? '#3a3a40' : 'none'};
  }
`;

const GroupRow = styled.div`
  display: flex;
`;

const Group = styled.div<{ $w: number }>`
  width: ${p => p.$w}px;
  height: 48px;
  margin-top: 1px;
  border-right: 1px solid #d3d3d3;
  display: flex;
  flex-direction: column;
  align-items: center;
  &:last-child { border-right: 0; }
`;

const IconRow = styled.div`
  display: flex;
`;

const RibbonIcon = styled.svg<{ $selected: boolean }>`
  width: 40px;
  height: 32px;
  ${p => p.$selected && `
    width: 37px;
    height: 36px;
    margin: -3px 0 -1px;
    padding: 1px 0 3px;
    background: #dcecf1;
    box-shadow: inset 0 0 0 1px #a9d3df;
  `}
`;

const GroupLabel = styled.div<{ $pad?: number }>`
  display: flex;
  align-items: center;
  gap: 4px;
  padding-right: ${p => p.$pad || 0}px;
  font-size: 11.5px;
  letter-spacing: -.34px;
  line-height: 21px;
`;

const Viewport = styled.div`
  height: 497px;
  flex: none;
  display: grid;
`;

const SceneSvg = styled.svg`
  grid-area: 1 / 1;
  width: 1276px;
  height: 497px;
`;

const Overlay = styled.div`
  grid-area: 1 / 1;
  z-index: 1;
  display: flex;
  flex-direction: column;
  padding: 4px 0 3px 4px;
`;

const PanelHeader = styled.div<{ $wide?: boolean }>`
  width: 281px;
  height: ${p => p.$wide ? 24 : 23}px;
  flex: none;
  background: #f3f3f3;
  border: 1px solid #dadada;
  display: flex;
  align-items: center;
  padding: 0 11px 0 5px;
`;

const PanelTitle = styled.div<{ $ml: number }>`
  flex: 1;
  margin-left: ${p => p.$ml}px;
  font-size: 12px;
  letter-spacing: -.6px;
`;

const Tree = styled.div`
  flex: 1;
  padding-top: 2.5px;
`;

const TreeRow = styled.div<{ $indent: number }>`
  height: 22.5px;
  display: flex;
  align-items: center;
  padding-left: ${p => p.$indent - 4}px;
`;

const RowBody = styled.div`
  margin-left: 4px;
  display: flex;
  background: #f5f5f5;
`;

const RowLabel = styled.div<{ $active?: boolean, $ls: number }>`
  height: 19px;
  display: flex;
  align-items: center;
  gap: 9.5px;
  padding-right: 8px;
  font-size: 12px;
  letter-spacing: ${p => p.$ls}px;
  background: ${p => p.$active
    ? 'repeating-linear-gradient(135deg, #a9b9d2 0 1.5px, transparent 1.5px 5px) 0 100% / 100% 3px no-repeat, #d3d5d7'
    : 'none'};
`;

const BottomRow = styled.div`
  display: flex;
  align-items: center;
`;

const NavBar = styled.div`
  height: 24px;
  width: 225px;
  margin: -5px 0 0 243px;
  background: rgba(243, 243, 243, .92);
  display: flex;
  align-items: center;
`;

const NavItem = styled.div<{ $ml: number }>`
  margin-left: ${p => p.$ml}px;
`;

const Status = styled.div`
  flex: 1;
  display: flex;
  align-items: center;
  justify-content: flex-end;
  gap: 15px;
  padding-right: 6px;
  font-size: 12px;
  letter-spacing: -.47px;
  color: #1d1d1d;
`;

const Timeline = styled.div`
  height: 47px;
  flex: none;
  background: #f3f3f3;
  border-bottom: 1px solid #a5a5a5;
  display: flex;
  align-items: center;
  padding: 0 6px 0 10px;
`;

const Playback = styled.div`
  width: 105px;
  display: flex;
  align-items: center;
  justify-content: space-between;
`;

const History = styled.div`
  margin: 8px 0 0 21px;
  display: flex;
  border-bottom: 1.5px solid #bcbcbc;
  width: 76px;
`;

const Feature = styled.div`
  width: 22.5px;
  height: 23px;
  flex: none;
  background: linear-gradient(#bcbcbc, #bcbcbc) 8px 100% / 1px 5px no-repeat;
`;

const Marker = styled.svg`
  width: 12px;
  height: 30px;
  margin: 3px 0 0 5px;
`;

const TimelineEnd = styled.div`
  flex: 1;
  display: flex;
  justify-content: flex-end;
`;

const Taskbar = styled.div`
  flex: 1;
  display: flex;
  align-items: center;
  padding-left: 206px;
  background: linear-gradient(90deg, #d3dde9 0, #d2dee6 180px, #d5e0d6 240px, #dbdeda 420px, #eae1cb 520px, #efe3ca 740px, #e6dcd4 880px, #e4dada 960px, #e3d9d5 1060px, #dcdbdd 1276px);
`;

const SearchBox = styled.div`
  width: 205px;
  height: 30px;
  margin-left: 13px;
  border-radius: 15px;
  background: #f5f7f7;
  border: 1px solid #c9cfcf;
  display: flex;
  align-items: center;
  gap: 10px;
  padding-left: 9px;
  font: 12.5px 'Open Sans', sans-serif;
  color: #5c5c5c;
`;

const Apps = styled.div`
  display: flex;
  gap: 5.4px;
  margin-left: 3.5px;
`;

const AppButton = styled.div<{ $active?: boolean }>`
  width: 36px;
  height: 36px;
  border-radius: 4px;
  background: ${p => p.$active ? '#f6f0ea' : 'none'};
  display: flex;
  flex-direction: column;
  align-items: center;
`;

const AppIcon = styled.div`
  height: 33px;
  flex: none;
  padding-top: 1px;
  display: flex;
  align-items: center;
`;

const Indicator = styled.div<{ $active?: boolean }>`
  width: ${p => p.$active ? 15 : 5}px;
  height: 3px;
  flex: none;
  border-radius: 2px;
  background: ${p => p.$active ? '#1472bd' : '#8f8672'};
`;

const Tray = styled.div`
  flex: 1;
  display: flex;
  align-items: center;
  margin-left: 66px;
  font-family: 'Open Sans', sans-serif;
  color: #1e1e1e;
`;

const TrayText = styled.div<TextProps>`
  width: 22px;
  margin-left: 18px;
  font-size: ${p => p.$size}px;
  letter-spacing: ${p => p.$ls}px;
`;

const Percent = styled.div`
  margin-left: 2px;
  font-size: 11px;
  letter-spacing: -.4px;
`;

const Clock = styled.div`
  flex: 1;
  display: flex;
  flex-direction: column;
  align-items: flex-end;
  padding: 0 12px 2px 0;
  font-size: 11px;
  line-height: 15px;
`;

export default App;
